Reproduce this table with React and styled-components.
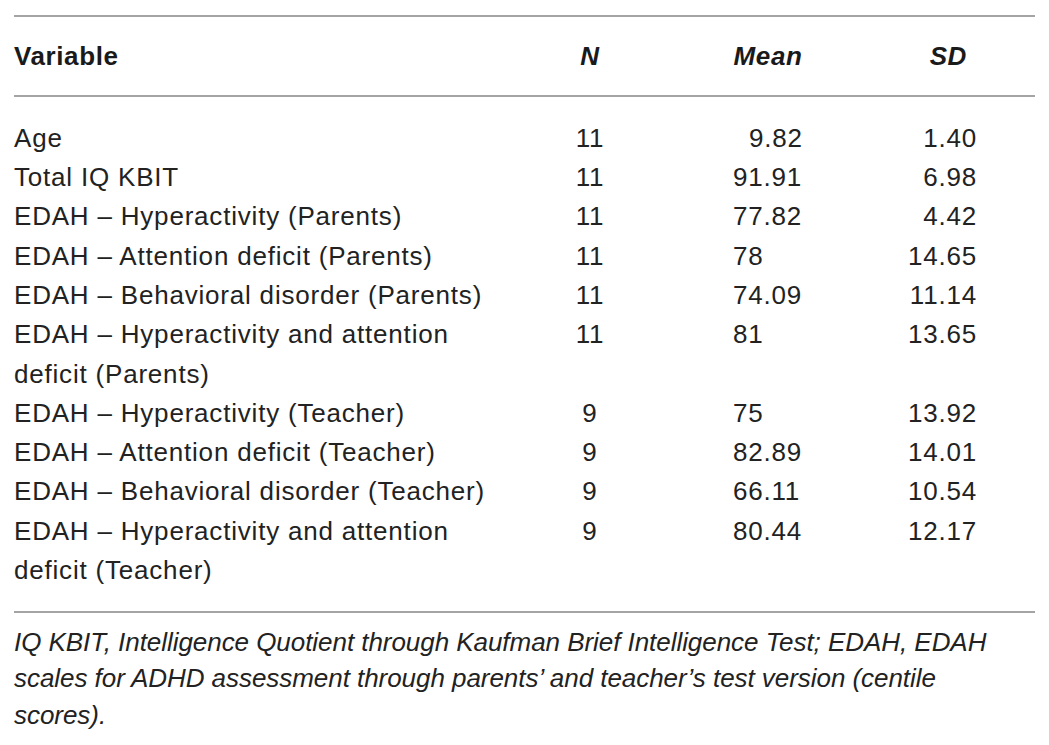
import React from "react";
import styled, { createGlobalStyle } from "styled-components";

const GlobalStyle = createGlobalStyle`
  html, body {
    margin: 0;
    padding: 0;
    background: #fff;
  }
  body {
    font-family: "Liberation Sans", Arial, Helvetica, sans-serif;
    color: #222;
  }
`;

const Page = styled.div`
  padding: 15px 14px 0 14px;
  width: 1021px;
`;

const Table = styled.table`
  width: 1021px;
  border-collapse: collapse;
  table-layout: fixed;
  font-size: 26px;
  line-height: 39.3px;
  letter-spacing: 0.8px;
`;

const Head = styled.thead`
  th {
    border-top: 2px solid #a4a4a4;
    border-bottom: 2px solid #a4a4a4;
    padding-top: 20px;
    padding-bottom: 19px;
  }
`;

const Body = styled.tbody`
  tr:first-child td {
    padding-top: 21.5px;
  }
  tr:last-child td {
    padding-bottom: 20.6px;
    border-bottom: 2px solid #a4a4a4;
  }
`;

const HeadCell = styled.th`
  font-weight: 700;
  font-style: ${(p) => (p.$italic ? "italic" : "normal")};
  text-align: ${(p) => p.$align || "left"};
  padding-left: ${(p) => p.$pl || 0}px;
  padding-right: ${(p) => p.$pr || 0}px;
  letter-spacing: 0.6px;
  color: #1a1a1a;
`;

const Cell = styled.td`
  padding: 0;
  vertical-align: top;
  white-space: nowrap;
  text-align: ${(p) => p.$align || "left"};
  padding-left: ${(p) => p.$pl || 0}px;
  padding-right: ${(p) => p.$pr || 0}px;
`;

const Indent = styled.span`
  padding-left: ${(p) => p.$w}px;
`;

const Note = styled.p`
  margin: 0;
  padding-top: 11px;
  font-size: 26px;
  line-height: 36.5px;
  font-style: italic;
  letter-spacing: -0.05px;
  white-space: nowrap;
`;

const rows = [
  { label: ["Age"], n: "11", mean: "9.82", sd: "1.40", indent: true },
  { label: ["Total IQ KBIT"], n: "11", mean: "91.91", sd: "6.98" },
  { label: ["EDAH – Hyperactivity (Parents)"], n: "11", mean: "77.82", sd: "4.42" },
  { label: ["EDAH – Attention deficit (Parents)"], n: "11", mean: "78", sd: "14.65" },
  { label: ["EDAH – Behavioral disorder (Parents)"], n: "11", mean: "74.09", sd: "11.14" },
  {
    label: ["EDAH – Hyperactivity and attention", "deficit (Parents)"],
    n: "11",
    mean: "81",
    sd: "13.65",
  },
  { label: ["EDAH – Hyperactivity (Teacher)"], n: "9", mean: "75", sd: "13.92" },
  { label: ["EDAH – Attention deficit (Teacher)"], n: "9", mean: "82.89", sd: "14.01" },
  { label: ["EDAH – Behavioral disorder (Teacher)"], n: "9", mean: "66.11", sd: "10.54" },
  {
    label: ["EDAH – Hyperactivity and attention", "deficit (Teacher)"],
    n: "9",
    mean: "80.44",
    sd: "12.17",
  },
];

function App() {
  return (
    <Page>
      <GlobalStyle />
      <Table>
        <colgroup>
          <col style={{ width: 536 }} />
          <col style={{ width: 80 }} />
          <col style={{ width: 276 }} />
          <col style={{ width: 129 }} />
        </colgroup>
        <Head>
          <tr>
            <HeadCell>Variable</HeadCell>
            <HeadCell $italic $align="center">N</HeadCell>
            <HeadCell $italic $align="center">Mean</HeadCell>
            <HeadCell $italic $align="right" $pr={68}>SD</HeadCell>
          </tr>
        </Head>
        <Body>
          {rows.map((r, i) => (
            <tr key={i}>
              <Cell>
                {r.label.map((l, j) => (
                  <React.Fragment key={j}>
                    {j > 0 && <br />}
                    {l}
                  </React.Fragment>
                ))}
              </Cell>
              <Cell $align="center">{r.n}</Cell>
              <Cell $pl={103}>
                {r.indent ? <Indent $w={16}>{r.mean}</Indent> : r.mean}
              </Cell>
              <Cell $align="right" $pr={58}>{r.sd}</Cell>
            </tr>
          ))}
        </Body>
      </Table>
      <Note>
        IQ KBIT, Intelligence Quotient through Kaufman Brief Intelligence Test; EDAH, EDAH
        <br />
        scales for ADHD assessment through parents’ and teacher’s test version (centile
        <br />
        scores).
      </Note>
    </Page>
  );
}

export default App;
